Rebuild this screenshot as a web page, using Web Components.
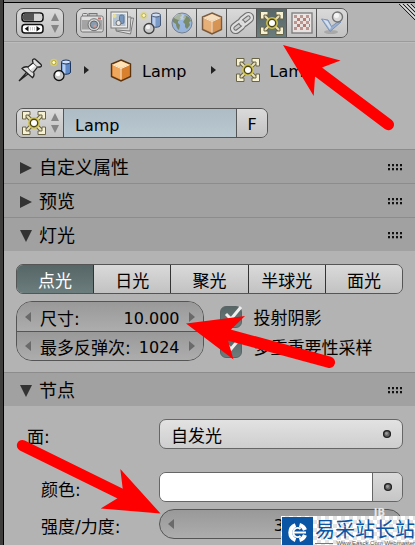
<!DOCTYPE html>
<html lang="zh-CN">
<head>
<meta charset="utf-8">
<meta name="viewport" content="width=device-width, initial-scale=1">
<title>Lamp</title>
<style>
  body {
    margin: 0;
    min-height: 100vh;
    overflow: hidden;
    position: relative;
    font: 16px/30px "DejaVu Sans", "Noto Sans CJK SC", sans-serif;
    color: #000;
    background: #3e3d3c;
    --line: #555;
    --button: linear-gradient(#dadada, #c2c2c2);
    --field: linear-gradient(#999, #adadad);
  }
</style>
</head>
<body>
<properties-editor></properties-editor>
<pointer-arrows></pointer-arrows>
<site-badge></site-badge>

<script>
const icons = {
  editor: `
    <rect x="1" y="2" width="21" height="8.5" rx="3" fill="#fff" stroke="#111" stroke-width="1.5"/>
    <path d="M4 2.7h9v7H4c-3 0-3-7 0-7z" fill="#555"/>
    <path d="M13 2.7h6c3 0 3 7 0 7h-6z" fill="#d5d5d5"/>
    <rect x="1" y="13.5" width="21" height="8.5" rx="3" fill="#fff" stroke="#111" stroke-width="1.5"/>
    <path d="M7.5 15v5.5L3.7 17.7zM15.5 15v5.5l3.8-2.7z" fill="#111"/>
    <path d="M9.5 16v3.5M11.5 16v3.5M13.5 16v3.5" stroke="#ccc"/>`,
  camera: `
    <rect x="2.5" y="2.5" width="5" height="4" rx="1" fill="#ddd" stroke="#555"/>
    <rect x="9" y="2.5" width="8" height="4" fill="#bbb" stroke="#555"/>
    <rect x=".8" y="5" width="22.4" height="16" rx="1.8" fill="#e3e3e3" stroke="#555"/>
    <rect x="2" y="9" width="20" height="9.5" fill="#969696"/>
    <rect x="18" y="6.5" width="3" height="2" fill="#b34c42"/>
    <circle cx="14" cy="13.7" r="6" fill="#d6d6d6" stroke="#555"/>
    <circle cx="14" cy="13.7" r="3.7" fill="#728ca9" stroke="#444"/>
    <circle cx="15" cy="15" r="1.6" fill="#ca8b84"/>`,
  layers: `
    <path d="M9 8 23.5 7 20.5 23 6 20z" fill="#eee" stroke="#5e5e5e"/>
    <path d="M6 6h15l-1 14-14-1z" fill="#d9d9d9" stroke="#5e5e5e"/>
    <rect x="1" y="1" width="16.5" height="16" fill="#f4f4f4" stroke="#5e5e5e"/>
    <rect x="3" y="3" width="12.5" height="12" fill="#a8bdd3"/>
    <rect x="9.5" y="4" width="4.5" height="8.5" rx="1.5" fill="#5b83b5" stroke="#365677"/>
    <circle cx="8.5" cy="12" r="2.5" fill="#eee" stroke="#555"/>
    <circle cx="4.5" cy="5" r="2" fill="#ede47b"/>`,
  scene: `
    <path d="M11.5 4v10c0 3 9 3 9 0V4z" fill="#5d87c5" stroke="#1c345c"/>
    <path d="M12.5 5v9c0 1 2 1.5 3 1.5V5z" fill="#b4cdf0"/>
    <ellipse cx="16" cy="4" rx="4.5" ry="2" fill="#cfe0f8" stroke="#1c345c"/>
    <circle cx="9" cy="17.5" r="5" fill="#c9c9c9" stroke="#111" stroke-width="1.3"/>
    <circle cx="8" cy="16" r="2.2" fill="#fff"/>
    <circle cx="3.8" cy="4.5" r="3.8" fill="#ddd36a" opacity=".7"/>
    <circle cx="3.8" cy="4.5" r="2" fill="#fffbd0" stroke="#b8a81c"/>`,
  world: `
    <circle cx="12" cy="12" r="10" fill="#86aee3" stroke="#5a6678"/>
    <path d="M3 8c2-3 5-5 8-5l1 2-2 1 1 2-3 2v2l2 2-1 5c-2-1-3-4-3-6L3 11zM14 4l5 2 2 4-2 1 1 3-3 4-2-2v-3l-2-2 2-3-2-1z" fill="#5d7448"/>
    <ellipse cx="10" cy="6" rx="6" ry="3" fill="#fff" opacity=".4"/>`,
  object: `
    <path d="M12 2 21.5 6v12.5L12 23l-9.5-4.5V6z" fill="#dd8534" stroke="#5b3511" stroke-width="1.4"/>
    <path d="M12 3 20 6.5l-8 3.5-8-3.5z" fill="#ffe2b6"/>
    <path d="M3.7 7.5 11.5 11v10.3l-7.8-3.6z" fill="#efa65d"/>
    <path d="M12.5 11 20.3 7.5v10.2l-7.8 3.6z" fill="#d8802d"/>
    <path d="M12 10.5v11M12 10.5 3.5 6.7M12 10.5l8.5-3.8" stroke="#fff0d8"/>`,
  link: `
    <g stroke="#505050" stroke-width="4.5">
      <rect x="1.5" y="12" width="13" height="7" rx="3.5" transform="rotate(-38 8 15.5)"/>
      <rect x="9.5" y="5" width="13" height="7" rx="3.5" transform="rotate(-38 16 8.5)"/>
    </g>
    <g stroke="#e4e4e4" stroke-width="2.4">
      <rect x="1.5" y="12" width="13" height="7" rx="3.5" transform="rotate(-38 8 15.5)"/>
      <rect x="9.5" y="5" width="13" height="7" rx="3.5" transform="rotate(-38 16 8.5)"/>
    </g>`,
  lamp: `
    <path d="M4 4 20 20M20 4 4 20" stroke="#6a6446" stroke-width="4"/>
    <path d="M4 4 20 20M20 4 4 20" stroke="#e9e2b8" stroke-width="2"/>
    <g fill="#f6f1d2" stroke="#6a6446">
      <path d="M.5.5H8V4H4v4H.5z"/>
      <path d="M23.5.5H16V4h4v4h3.5z"/>
      <path d="M.5 23.5H8V20H4v-4H.5z"/>
      <path d="M23.5 23.5H16V20h4v-4h3.5z"/>
    </g>
    <circle cx="12" cy="12" r="6" fill="#d2c44c" opacity=".9"/>
    <circle cx="12" cy="12" r="3.7" fill="#fff" stroke="#4d4616" stroke-width="1.4"/>`,
  texture: `
    <rect x="2" y="2" width="20" height="20" fill="#f2ebe8" stroke="#666" stroke-width="1.4"/>
    <path d="M4 5.5h16M4 11.5h16M4 17.5h16" stroke="#b5827b" stroke-width="3" stroke-dasharray="3 3"/>
    <path d="M7 8.5h13M7 14.5h13" stroke="#a3635a" stroke-width="3" stroke-dasharray="3 3"/>`,
  physics: `
    <ellipse cx="11" cy="21" rx="7" ry="2" fill="#777" opacity=".5"/>
    <path d="M1.5 8 10 20.5 21 11l-4 .5-5.5 4L8 9z" fill="#87a6d4" stroke="#6280ab"/>
    <path d="M3 8.5l7 10 1-2.5-3.5-6z" fill="#d7e5f8"/>
    <circle cx="17.5" cy="6" r="5" fill="#ddd" stroke="#555" stroke-width="1.4"/>
    <circle cx="16.5" cy="4.5" r="2.5" fill="#fff"/>`,
  pin: `
    <path d="M9 14 1 23l9.5-7.5z" fill="#eee" stroke="#222" stroke-width="1.3"/>
    <path d="M4 10.5c2-2 4-2 6-1.5l5-4-.5-2.5c0-1.5 2-2 3-1l5.5 5c1 1.5 0 2.5-1.5 2.5l-2 .2-4 5c1 2 .5 4-1 5.5z" fill="#ddd" stroke="#222" stroke-width="1.3"/>
    <path d="m10 10 5-4 2 2-5 4z" fill="#fff"/>
    <path d="M10 9c1 3 3 5 5.5 5.5M15 5l5 4.5" stroke="#555"/>`,
  dot: `
    <circle cx="12" cy="12" r="3.4" fill="#666" stroke="#222" stroke-width="1.4"/>
    <circle cx="11.5" cy="11.5" r="1.4" fill="#999"/>`
};

class UiIcon extends HTMLElement {
  connectedCallback() {
    this.attachShadow({ mode: 'open' }).innerHTML = `
      <style>
        :host { display: block; flex: none; width: 24px; height: 24px; }
        svg { display: block; width: 100%; height: 100%; }
      </style>
      <svg viewBox="0 0 24 24" fill="none" aria-hidden="true">${icons[this.getAttribute('name')]}</svg>`;
  }
}

class UpDown extends HTMLElement {
  connectedCallback() {
    this.attachShadow({ mode: 'open' }).innerHTML = `
      <style>
        :host { display: block; flex: none; width: 8px; height: 20px; }
        svg { display: block; }
      </style>
      <svg width="8" height="20" fill="#858585" aria-hidden="true"><path d="M0 8 4 0l4 8zM0 12l4 8 4-8z"/></svg>`;
  }
}

class EditorHeader extends HTMLElement {
  connectedCallback() {
    const tabs = [
      ['camera', 'Render'], ['layers', 'Layers'], ['scene', 'Scene'],
      ['world', 'World'], ['object', 'Object'], ['link', 'Constraints'],
      ['lamp', 'Data'], ['texture', 'Texture'], ['physics', 'Physics']
    ];
    this.attachShadow({ mode: 'open' }).innerHTML = `
      <style>
        :host {
          display: flex;
          gap: 12px;
          padding: 5px 12px 3px;
          background: #b4b4b4;
          border-bottom: 1px solid #9b9b9b;
          position: relative;
        }
        button {
          box-sizing: border-box;
          height: 30px;
          padding: 0;
          display: flex;
          align-items: center;
          justify-content: center;
          border: 0;
          background: var(--button);
        }
        .editor {
          width: 48px;
          gap: 6px;
          border: 1px solid var(--line);
          border-radius: 7px;
        }
        nav {
          display: flex;
          border: 1px solid var(--line);
          border-radius: 7px;
          overflow: hidden;
          height: 28px;
        }
        nav button { width: 30px; height: 28px; border-right: 1px solid var(--line); }
        nav button:last-child { border-right: 0; }
        nav ui-icon { opacity: .75; }
        nav .active { background: linear-gradient(#566565, #6c7d7d); }
        nav .active ui-icon { opacity: 1; }
        .grip { position: absolute; top: 0; right: 0; }
      </style>
      <button class="editor" aria-label="Editor type"><ui-icon name="editor"></ui-icon><up-down></up-down></button>
      <nav>
        ${tabs.map(([icon, name]) => `
          <button class="${icon === 'lamp' ? 'active' : ''}" aria-label="${name}"><ui-icon name="${icon}"></ui-icon></button>`).join('')}
      </nav>
      <svg class="grip" width="17" height="17" stroke="#222" aria-hidden="true">
        <path d="M1 1 17 17M5 1 17 13M9 1 17 9M13 1l4 4"/>
        <path d="M3 1 17 15M7 1l10 10M11 1l6 6" stroke="#ddd"/>
      </svg>`;
  }
}

class PathBar extends HTMLElement {
  connectedCallback() {
    this.attachShadow({ mode: 'open' }).innerHTML = `
      <style>
        :host { display: flex; align-items: center; height: 30px; padding-left: 2px; }
        .crumb { display: flex; align-items: center; gap: 9px; }
        .arrow { width: 5px; height: 8px; margin-left: 10px; }
        .far { margin-left: 25px; }
        .scene { margin-left: 8px; }
        .object, .lamp { margin-left: 20px; }
        span { padding-top: 4px; }
      </style>
      <ui-icon name="pin"></ui-icon>
      <ui-icon class="scene" name="scene"></ui-icon>
      <svg class="arrow" fill="#222"><path d="M0 0l5 4-5 4z"/></svg>
      <div class="crumb object"><ui-icon name="object"></ui-icon><span>Lamp</span></div>
      <svg class="arrow far" fill="#222"><path d="M0 0l5 4-5 4z"/></svg>
      <div class="crumb lamp"><ui-icon name="lamp"></ui-icon><span>Lamp</span></div>`;
  }
}

class DataBlock extends HTMLElement {
  connectedCallback() {
    this.attachShadow({ mode: 'open' }).innerHTML = `
      <style>
        :host {
          display: flex;
          box-sizing: border-box;
          width: 252px;
          height: 30px;
          border: 1px solid var(--line);
          border-radius: 7px;
          overflow: hidden;
        }
        button, input {
          box-sizing: border-box;
          border: 0;
          margin: 0;
          font: inherit;
          color: inherit;
          height: 28px;
        }
        button {
          display: flex;
          flex: none;
          align-items: center;
          justify-content: center;
          gap: 5px;
          padding: 0;
          background: var(--button);
        }
        .browse { width: 46px; }
        .fake { width: 30px; padding-top: 4px; }
        input {
          flex: 1;
          min-width: 0;
          padding: 4px 11px 0;
          line-height: 24px;
          background: linear-gradient(#adbcc5, #bac8d0);
          border: solid var(--line);
          border-width: 0 1px;
        }
      </style>
      <button class="browse" aria-label="Browse lamps"><ui-icon name="lamp"></ui-icon><up-down></up-down></button>
      <input aria-label="Name" value="Lamp">
      <button class="fake">F</button>`;
  }
}

class SidePanel extends HTMLElement {
  connectedCallback() {
    const open = this.hasAttribute('open');
    this.attachShadow({ mode: 'open' }).innerHTML = `
      <style>
        :host { display: block; }
        header {
          display: flex;
          align-items: center;
          box-sizing: border-box;
          height: 34px;
          padding: 2px 12px 0 16px;
          border-top: 1px solid #8c8c8c;
          background: #a1a1a1;
        }
        h2 { flex: 1; margin: 0 0 0 7px; font-size: 18px; font-weight: normal; }
        svg { display: block; }
        .body { padding: 13px 12px 11px; background: #b3b3b3; }
      </style>
      <header>
        <svg width="12" height="12" fill="#333"><path d="${open ? 'M0 0h12L6 12z' : 'M0 0l12 6-12 6z'}"/></svg>
        <h2>${this.getAttribute('heading')}</h2>
        <svg width="15" height="7">
          <path d="M0 1h15M0 5h15" stroke="#111" stroke-width="2" stroke-dasharray="2 2"/>
          <path d="M0 2.5h15M0 6.5h15" stroke="#777" stroke-dasharray="2 2"/>
        </svg>
      </header>
      ${open ? '<div class="body"><slot></slot></div>' : ''}`;
  }
}

class LampTypes extends HTMLElement {
  connectedCallback() {
    this.attachShadow({ mode: 'open' }).innerHTML = `
      <style>
        :host {
          display: flex;
          border: 1px solid var(--line);
          border-radius: 7px;
          overflow: hidden;
        }
        button {
          flex: 1 1 0;
          height: 28px;
          padding: 4px 0 0;
          border: 0;
          font: inherit;
          font-size: 17px;
          line-height: 24px;
          color: inherit;
          background: var(--button);
        }
        button + button { border-left: 1px solid #333; }
        .active { color: #fff; background: linear-gradient(#566565, #6c7d7d); }
      </style>
      ${['点光', '日光', '聚光', '半球光', '面光'].map((name, i) => `<button class="${i ? '' : 'active'}">${name}</button>`).join('')}`;
  }
}

class NumberField extends HTMLElement {
  connectedCallback() {
    this.attachShadow({ mode: 'open' }).innerHTML = `
      <style>
        :host {
          display: flex;
          align-items: center;
          box-sizing: border-box;
          height: 30px;
          min-width: 0;
          padding: 0 8px;
          background: var(--field);
        }
        label { margin-left: 9px; padding-top: 4px; font-size: 17px; line-height: 26px; white-space: nowrap; }
        input {
          flex: 1;
          min-width: 0;
          margin: 0 9px 0 0;
          padding: 4px 0 0;
          border: 0;
          font: inherit;
          line-height: 26px;
          color: inherit;
          text-align: right;
          background: none;
        }
        svg { flex: none; }
      </style>
      <svg width="6" height="10" fill="#6a6a6a"><path d="M6 0v10L0 5z"/></svg>
      <label for="value">${this.getAttribute('label')}</label>
      <input id="value" value="${this.getAttribute('value')}">
      <svg width="6" height="10" fill="#6a6a6a"><path d="M0 0v10l6-5z"/></svg>`;
  }
}

class CheckField extends HTMLElement {
  connectedCallback() {
    this.attachShadow({ mode: 'open' }).innerHTML = `
      <style>
        :host { display: block; height: 30px; }
        label {
          display: grid;
          grid-template-columns: 22px 1fr;
          align-items: center;
          gap: 12px;
          height: 30px;
          font-size: 17px;
          white-space: nowrap;
        }
        input {
          appearance: none;
          grid-area: 1 / 1;
          width: 22px;
          height: 22px;
          margin: 0;
          border: 1px solid #5b6464;
          border-radius: 6px;
          background: linear-gradient(#566565, #6c7d7d);
        }
        svg { grid-area: 1 / 1; overflow: visible; pointer-events: none; }
        span { grid-area: 1 / 2; padding-top: 2px; }
        input:not(:checked) + svg { display: none; }
      </style>
      <label>
        <input type="checkbox" checked>
        <svg width="22" height="22" fill="none" stroke="#eee" stroke-width="3"><path d="M6 8l5 5L21 1"/></svg>
        <span><slot></slot></span>
      </label>`;
  }
}

class LampSettings extends HTMLElement {
  connectedCallback() {
    this.attachShadow({ mode: 'open' }).innerHTML = `
      <style>
        :host { display: grid; grid-template-columns: 1fr 1fr; gap: 12px; margin-top: 7px; }
        .numbers {
          border: 1px solid var(--line);
          border-radius: 16px;
          overflow: hidden;
        }
        .numbers number-field { height: 29px; }
        .numbers number-field + number-field { border-top: 1px solid var(--line); }
        .checks { padding: 0 4px; }
      </style>
      <div class="numbers">
        <number-field label="尺寸:" value="10.000"></number-field>
        <number-field label="最多反弹次:" value="1024"></number-field>
      </div>
      <div class="checks">
        <check-field>投射阴影</check-field>
        <check-field>多重重要性采样</check-field>
      </div>`;
  }
}

class NodeSettings extends HTMLElement {
  connectedCallback() {
    this.attachShadow({ mode: 'open' }).innerHTML = `
      <style>
        :host { display: grid; gap: 7px; }
        .row { display: grid; grid-template-columns: 143px minmax(0, 1fr); height: 30px; }
        .first { margin-bottom: 16px; }
        label { padding: 3px 0 0 25px; font-size: 17px; }
        .first label { padding-left: 11px; }
        .box {
          display: grid;
          grid-template-columns: 1fr 30px;
          box-sizing: border-box;
          height: 30px;
          border: 1px solid #666;
          border-radius: 7px;
          overflow: hidden;
          background: linear-gradient(#e2e2e2, #cecece);
        }
        select {
          appearance: none;
          grid-area: 1 / 1 / 2 / 3;
          border: 0;
          height: 28px;
          padding: 4px 11px 0;
          font: inherit;
          font-size: 17px;
          line-height: 24px;
          color: inherit;
          background: none;
        }
        ui-icon { grid-area: 1 / 2; align-self: center; justify-self: center; pointer-events: none; }
        .color { border: 0; padding: 0; background: #fff; }
        .socket {
          display: grid;
          place-items: center;
          padding: 0;
          border: 0;
          border-left: 1px solid #666;
          background: linear-gradient(#dadada, #c6c6c6);
        }
        .socket ui-icon { grid-area: auto; }
        .slider {
          display: flex;
          align-items: center;
          box-sizing: border-box;
          height: 30px;
          padding: 0 8px;
          border: 1px solid var(--line);
          border-radius: 15px;
          background: var(--field);
        }
        .slider svg { flex: none; }
        .slider input {
          flex: 1;
          min-width: 0;
          padding: 4px 110px 0 0;
          border: 0;
          font: inherit;
          line-height: 24px;
          color: inherit;
          text-align: right;
          background: none;
        }
      </style>
      <div class="row first">
        <label for="surface">面:</label>
        <div class="box">
          <select id="surface"><option>自发光</option></select>
          <ui-icon name="dot"></ui-icon>
        </div>
      </div>
      <div class="row">
        <label for="color">颜色:</label>
        <div class="box">
          <button class="color" id="color"></button>
          <button class="socket" aria-label="Input"><ui-icon name="dot"></ui-icon></button>
        </div>
      </div>
      <div class="row">
        <label for="strength">强度/力度:</label>
        <div class="slider">
          <svg width="6" height="10" fill="#6a6a6a"><path d="M6 0v10L0 5z"/></svg>
          <input id="strength" value="3">
        </div>
      </div>`;
  }
}

class PropertiesEditor extends HTMLElement {
  connectedCallback() {
    this.attachShadow({ mode: 'open' }).innerHTML = `
      <style>
        :host {
          display: block;
          box-sizing: border-box;
          min-height: 100vh;
          margin-left: 3px;
          border-left: 1px solid #000;
          background: #b3b3b3;
        }
        .edge { height: 2px; background: #8c8c8c; border-bottom: 1px solid #000; }
        .context { padding: 12px 12px 11px; border-top: 1px solid #bcbcbc; background: #b3b3b3; }
        path-bar { margin-bottom: 23px; }
      </style>
      <div class="edge"></div>
      <editor-header></editor-header>
      <div class="context">
        <path-bar></path-bar>
        <data-block></data-block>
      </div>
      <side-panel heading="自定义属性"></side-panel>
      <side-panel heading="预览"></side-panel>
      <side-panel heading="灯光" open>
        <lamp-types></lamp-types>
        <lamp-settings></lamp-settings>
      </side-panel>
      <side-panel heading="节点" open>
        <node-settings></node-settings>
      </side-panel>`;
  }
}

// red arrows laid over the editor
class PointerArrows extends HTMLElement {
  connectedCallback() {
    this.attachShadow({ mode: 'open' }).innerHTML = `
      <style>
        :host { position: absolute; top: 0; left: 0; pointer-events: none; }
        svg { display: block; }
      </style>
      <svg width="415" height="545" fill="#f00" stroke-linecap="round" aria-hidden="true">
        <path d="M283 45 340.5 60.5 322 67.5 315 77 313.7 96z"/>
        <path d="M318.5 72 388.3 124.5" stroke="#f00" stroke-width="11.5"/>
        <path d="M186 323.5 245 316 231 329.5 228 340.5 233.5 359.5z"/>
        <path d="M229 335 329.3 362.3" stroke="#f00" stroke-width="11.5"/>
        <path d="M160.5 513.5 120.3 469 122.7 488.5 117.5 498.3 100.7 508.5z"/>
        <path d="M120 493.5 22.3 445.5" stroke="#f00" stroke-width="11"/>
      </svg>`;
  }
}

class SiteBadge extends HTMLElement {
  connectedCallback() {
    this.attachShadow({ mode: 'open' }).innerHTML = `
      <style>
        :host { position: absolute; right: 0; bottom: 1px; }
        .mark {
          position: absolute;
          top: -9px;
          right: 30px;
          font: bold 10px/12px "DejaVu Sans", sans-serif;
          color: #e6e6e6;
        }
        .card {
          position: relative;
          display: flex;
          padding: 1px 0 1px 1px;
          gap: 2px;
          background: repeating-conic-gradient(#e4e4e4 0 25%, #fff 0 50%) 0 0 / 8px 8px;
        }
        svg { flex: none; }
        .name { font: 20px/23px "Noto Sans CJK SC", sans-serif; color: #0a56a5; white-space: nowrap; }
        .site {
          display: flex;
          align-items: center;
          justify-content: space-between;
          font: 6px/7px "Liberation Sans", sans-serif;
          color: #555;
          white-space: nowrap;
        }
        .site::before { content: ""; width: 18px; border-top: 1px solid #777; }
      </style>
      <span class="mark" aria-hidden="true">JB</span>
      <div class="card">
        <svg width="31" height="31" aria-hidden="true">
          <path fill="#0a56a5" d="M0 0h31v31H0z"/>
          <g fill="none" stroke="#fff">
            <path d="M13.5 8a8 8 0 0 0 0 15" stroke-width="4"/>
            <path d="M17.5 8a8 8 0 0 1 5.5 5M23 18a8 8 0 0 1-5.5 5" stroke-width="4"/>
            <path d="M18.5 12a4.5 4.5 0 1 0 0 7M11 15.5h13" stroke-width="2"/>
          </g>
        </svg>
        <div>
          <div class="name">易采站长站</div>
          <div class="site">Www.Easck.Com Webmaster</div>
        </div>
      </div>`;
  }
}

customElements.define('ui-icon', UiIcon);
customElements.define('up-down', UpDown);
customElements.define('editor-header', EditorHeader);
customElements.define('path-bar', PathBar);
customElements.define('data-block', DataBlock);
customElements.define('side-panel', SidePanel);
customElements.define('lamp-types', LampTypes);
customElements.define('number-field', NumberField);
customElements.define('check-field', CheckField);
customElements.define('lamp-settings', LampSettings);
customElements.define('node-settings', NodeSettings);
customElements.define('properties-editor', PropertiesEditor);
customElements.define('pointer-arrows', PointerArrows);
customElements.define('site-badge', SiteBadge);
</script>
</body>
</html>
